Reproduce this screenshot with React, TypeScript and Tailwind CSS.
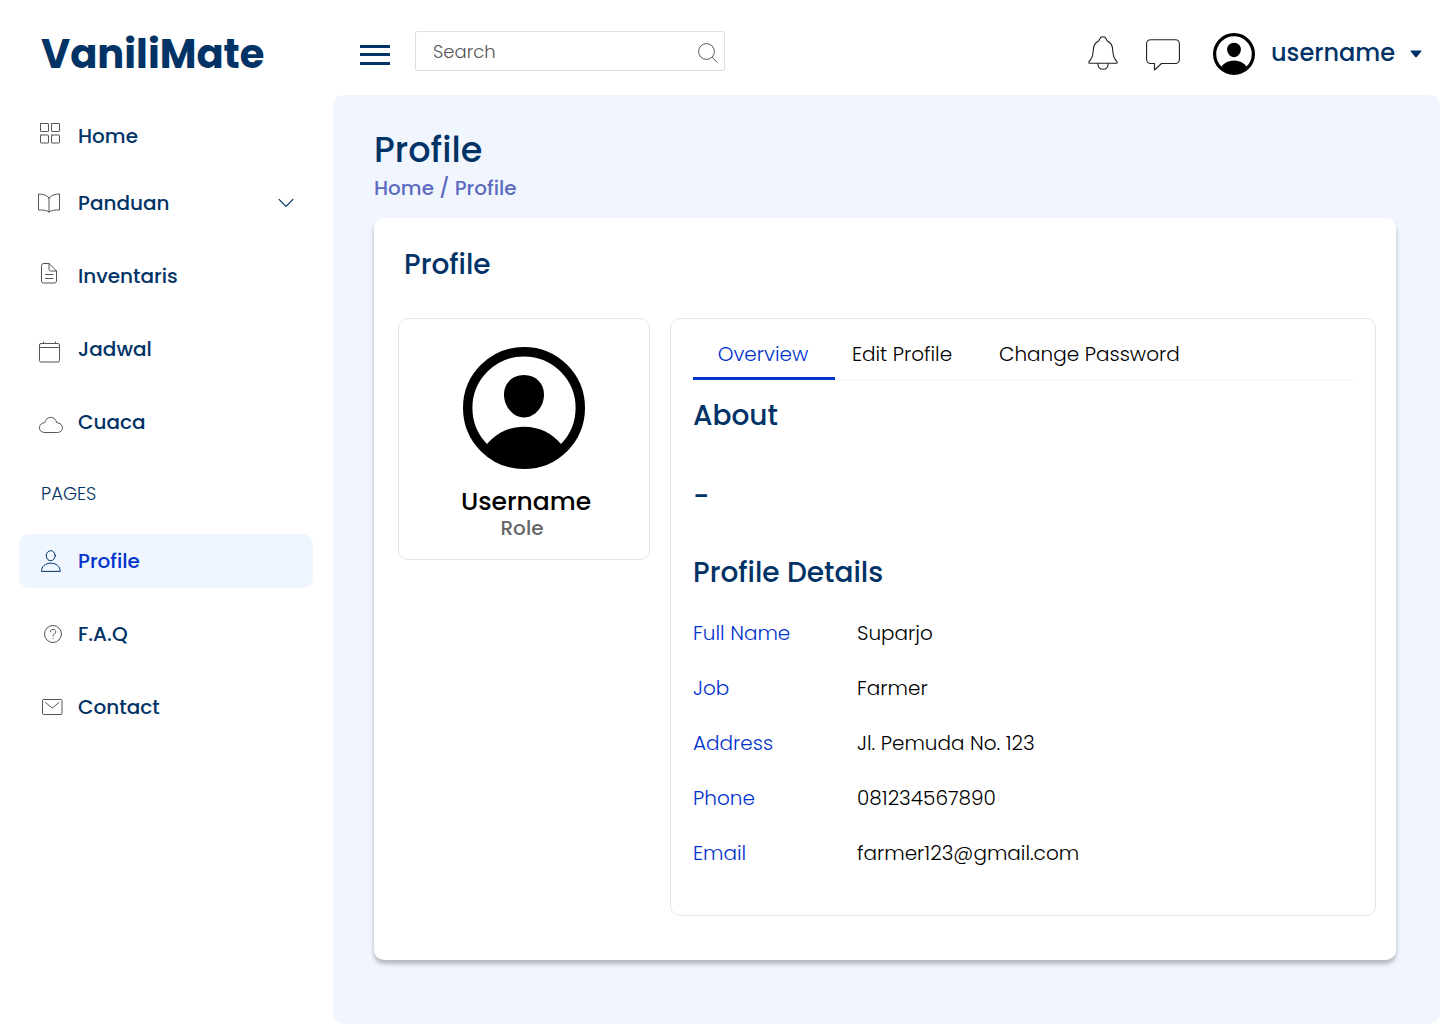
import React from "react";

type IconProps = { className?: string };

function NavIcon({ children }: { children: React.ReactNode }) {
  return (
    <svg
      viewBox="0 0 30 30"
      className="size-[30px] shrink-0"
      fill="none"
      stroke="currentColor"
      strokeWidth="1"
      strokeLinecap="round"
      strokeLinejoin="round"
      aria-hidden="true"
    >
      {children}
    </svg>
  );
}

const icons = {
  home: (
    <NavIcon>
      <rect x="5.5" y="2.5" width="8" height="8" rx="0.5" />
      <rect x="16.5" y="2.5" width="8" height="8" rx="0.5" />
      <rect x="5.5" y="14" width="8" height="8" rx="0.5" />
      <rect x="16.5" y="14" width="8" height="8" rx="0.5" />
    </NavIcon>
  ),
  book: (
    <NavIcon>
      <path d="M14 10C11.5 7 8 6 3.5 6V22C8 21.8 11.5 22.3 14 24C16.5 22.3 20 21.8 24.5 22V6C20 6 16.5 7 14 10ZM14 10V24" />
    </NavIcon>
  ),
  file: (
    <NavIcon>
      <path d="M8.5 2.5h5.5l7.5 7.5v10a2 2 0 0 1-2 2h-11a2 2 0 0 1-2-2v-15.5a2 2 0 0 1 2-2zM14 2.5v6a1.5 1.5 0 0 0 1.5 1.5h6M10.5 13.5h7.5M10.5 17.5h7.5" />
    </NavIcon>
  ),
  calendar: (
    <NavIcon>
      <rect x="4.5" y="9.5" width="20" height="18.500" rx="1.5" />
      <path d="M4.5 13.5h20M8.5 8v1M20.5 8v1" />
    </NavIcon>
  ),
  cloud: (
    <NavIcon>
      <path d="M8.8 25.5C6.2 25.3 4.4 23.2 4.4 20.7C4.4 17.7 7 15.8 9.8 15.6C10.5 12.3 12.8 10.4 15.7 10.4C18.8 10.4 21.2 12.5 21.6 15.6C25 15.8 27.5 18 27.5 20.8C27.5 23.5 25.3 25.5 22.8 25.5Z" />
    </NavIcon>
  ),
  user: (
    <NavIcon>
      <ellipse cx="15.7" cy="9.7" rx="4.5" ry="5" />
      <path d="M6.5 25C6.5 20.3 10.5 17.2 15.8 17.2S25.2 20.3 25.2 25Z" />
    </NavIcon>
  ),
  help: (
    <NavIcon>
      <circle cx="18" cy="15" r="8.5" />
      <path d="M15.3 12.8a2.7 2.5 0 1 1 4.3 2c-1 .7-1.5 1.1-1.5 2.3M18.1 19.3v.2" />
    </NavIcon>
  ),
  mail: (
    <NavIcon>
      <rect x="7.5" y="7.5" width="19.5" height="15" rx="1" />
      <path d="M10.5 10.5L17.2 16L24 10.5" />
    </NavIcon>
  ),
};

function Avatar({ className }: IconProps) {
  return (
    <svg viewBox="0 0 122 122" className={className} aria-hidden="true">
      <circle cx="61" cy="61" r="56.3" fill="none" stroke="black" strokeWidth="9.4" />
      <path
        fill="black"
        d="M61 28C73 28 81 36.5 81 47.5C81 59.5 72 70.5 61 70.5S41 59.5 41 47.5C41 36.5 49 28 61 28Z"
      />
      <path fill="black" d="M24 97C33 86 46 79.7 61 79.7S89 86 98 97C88 113 76 119 61 119S34 113 24 97Z" />
    </svg>
  );
}

function NavItem({
  label,
  icon,
  active = false,
  expandable = false,
}: {
  label: string;
  icon: React.ReactNode;
  active?: boolean;
  expandable?: boolean;
}) {
  return (
    <li className={expandable ? "-mt-1.5" : undefined}>
      <a
        href="#"
        aria-current={active ? "page" : undefined}
        className={
          active
            ? "flex h-[54px] items-center gap-[13px] rounded-[10px] bg-[#eff6ff] px-4 text-[#0133cd]"
            : "flex h-[54px] items-center gap-[13px] rounded-[10px] px-4 text-[#013366]"
        }
      >
        <span className={active ? "text-[#013366]" : "text-[#555555]"}>{icon}</span>
        <span>{label}</span>
        {expandable && (
          <svg viewBox="0 0 16 10" className="mr-[3px] ml-auto h-2.5 w-4" fill="none" stroke="#013366" strokeWidth="1.2" aria-hidden="true">
            <path d="M0.8 1.2L8 8.4L15.2 1.2" />
          </svg>
        )}
      </a>
    </li>
  );
}

const details = [
  ["Full Name", "Suparjo"],
  ["Job", "Farmer"],
  ["Address", "Jl. Pemuda No. 123"],
  ["Phone", "081234567890"],
  ["Email", "farmer123@gmail.com"],
];

export default function App() {
  return (
    <div className="flex min-h-screen flex-col bg-white font-['Poppins','Inter',sans-serif] text-[#013366]">
      <header className="flex h-[95px] items-center pt-3 pr-[18px]">
        <a href="#" className="w-[360px] shrink-0 pl-[41px] text-[40px] leading-none font-bold">
          VaniliMate
        </a>
        <button type="button" aria-label="Toggle menu" className="mt-0.5 flex h-5 w-[30px] flex-col justify-between">
          <span className="h-[3px] w-full bg-[#013366]" />
          <span className="h-[3px] w-full bg-[#013366]" />
          <span className="h-[3px] w-full bg-[#013366]" />
        </button>
        <form role="search" className="mb-1.5 ml-[25px] flex h-10 w-[310px] items-center rounded-xs border border-[#e0e0e0] pr-1.5 pl-[17px]">
          <input
            type="search"
            aria-label="Search"
            placeholder="Search"
            className="min-w-0 flex-1 bg-transparent pt-0.5 text-lg font-light outline-none placeholder:text-[#555555]"
          />
          <button type="submit" aria-label="Submit search">
            <svg viewBox="0 0 20 20" className="mt-1 size-5" fill="none" stroke="#555555" strokeWidth="1" aria-hidden="true">
              <circle cx="8.5" cy="8.5" r="7.9" />
              <path d="M14 14.2L19.3 19.5" />
            </svg>
          </button>
        </form>
        <div className="ml-auto flex items-center">
          <button type="button" aria-label="Notifications">
            <svg viewBox="0 0 30 34" className="mb-0.5 h-[34px] w-[30px]" fill="none" stroke="#222222" strokeWidth="1.1" strokeLinejoin="round" aria-hidden="true">
              <path d="M1.5 27.2C.6 27.2 .6 26.2 1.2 25.5C4 22.5 5 20.5 5.2 15C5.4 9 7 6.8 11 4.7C11.8 2 13 .7 15 .7S18.2 2 19 4.7C23 6.8 24.6 9 24.8 15C25 20.5 26 22.5 28.8 25.5C29.4 26.2 29.4 27.2 28.5 27.2Z" />
              <path d="M9.8 27.2C9.8 31 12 33.3 15 33.3S20.2 31 20.2 27.2" />
            </svg>
          </button>
          <button type="button" aria-label="Messages" className="ml-7">
            <svg viewBox="0 0 34 32" className="mt-0.5 h-8 w-[34px]" fill="none" stroke="#222222" strokeWidth="1.1" strokeLinejoin="round" aria-hidden="true">
              <path d="M4.5 .7H29.5A4 4 0 0 1 33.4 4.7V20.5A4 4 0 0 1 29.5 24.5H15.5L8.5 31V24.5H4.5A4 4 0 0 1 .6 20.5V4.7A4 4 0 0 1 4.5 .7Z" />
            </svg>
          </button>
          <button type="button" className="ml-[33px] flex items-center text-2xl leading-8 font-medium">
            <Avatar className="mr-4 size-[42px]" />
            <span className="pb-0.5">username</span>
            <svg viewBox="0 0 12 8" className="ml-[15px] h-2 w-3" fill="currentColor" aria-hidden="true">
              <path d="M1 .5H11Q12 .8 11.3 1.6L6.8 7Q6 7.8 5.2 7L.7 1.6Q0 .8 1 .5Z" />
            </svg>
          </button>
        </div>
      </header>

      <div className="flex flex-1">
        <nav aria-label="Main" className="w-[333px] shrink-0 px-5 pt-3.5 pl-[19px] text-xl font-medium">
          <ul className="flex flex-col gap-[19px]">
            <NavItem label="Home" icon={icons.home} />
            <NavItem label="Panduan" icon={icons.book} expandable />
            <NavItem label="Inventaris" icon={icons.file} />
            <NavItem label="Jadwal" icon={icons.calendar} />
            <NavItem label="Cuaca" icon={icons.cloud} />
          </ul>
          <h2 className="pt-[33px] pb-7 pl-[22px] text-lg leading-6 font-light">PAGES</h2>
          <ul className="flex flex-col gap-[19px]">
            <NavItem label="Profile" icon={icons.user} active />
            <NavItem label="F.A.Q" icon={icons.help} />
            <NavItem label="Contact" icon={icons.mail} />
          </ul>
        </nav>

        <main className="min-w-0 flex-1 rounded-[10px] bg-[#f1f6fe] pt-[31px] pr-11 pb-16 pl-[41px]">
          <h1 className="text-[35px] leading-[48px] font-medium">Profile</h1>
          <nav aria-label="Breadcrumb" className="text-xl leading-7 font-medium text-[#5c6bc0]">
            <a href="#">Home</a> / <a href="#">Profile</a>
          </nav>

          <section className="mt-4 rounded-[10px] bg-white pt-[27px] pr-5 pb-11 pl-6 shadow-[0_4px_4px_rgba(0,0,0,0.25)]">
            <h2 className="mb-[33px] pl-1.5 text-[28px] leading-10 font-medium">Profile</h2>
            <div className="flex items-start gap-5">
              <div className="flex w-[252px] shrink-0 flex-col items-center rounded-[10px] border border-[#e5e5e5] pt-7 pb-5">
                <Avatar className="size-[122px]" />
                <p className="mt-[18px] pl-1 text-[25px] leading-[30px] font-medium text-black">Username</p>
                <p className="text-xl leading-[22px] font-medium text-[#666666] -ml-1">Role</p>
              </div>

              <div className="min-w-0 flex-1 rounded-[10px] border border-[#e5e5e5] pt-2.5 pr-[21px] pb-[34px] pl-[22px]">
                <div role="tablist" className="flex h-[51px] border-b border-[#f1f6fe] text-xl font-light text-black">
                  <button type="button" role="tab" aria-selected="true" className="-mb-px w-[142px] border-b-[3px] border-[#0133cd] pt-0.5 pr-0.5 text-[#0133cd]">
                    Overview
                  </button>
                  <button type="button" role="tab" aria-selected="false" className="w-[134px]">
                    Edit Profile
                  </button>
                  <button type="button" role="tab" aria-selected="false" className="px-[30px]">
                    Change Password
                  </button>
                </div>
                <h3 className="mt-4 text-[28px] leading-10 font-medium">About</h3>
                <p className="mt-[41px] text-[28px] leading-10 font-medium">-</p>
                <h3 className="mt-9 text-[28px] leading-10 font-medium">Profile Details</h3>
                <dl className="mt-3 mb-px text-xl font-light">
                  {details.map(([label, value]) => (
                    <div key={label} className="flex h-[55px] items-center">
                      <dt className="w-[164px] shrink-0 text-[#0133cd]">{label}</dt>
                      <dd className="text-black">{value}</dd>
                    </div>
                  ))}
                </dl>
              </div>
            </div>
          </section>
        </main>
      </div>
    </div>
  );
}
